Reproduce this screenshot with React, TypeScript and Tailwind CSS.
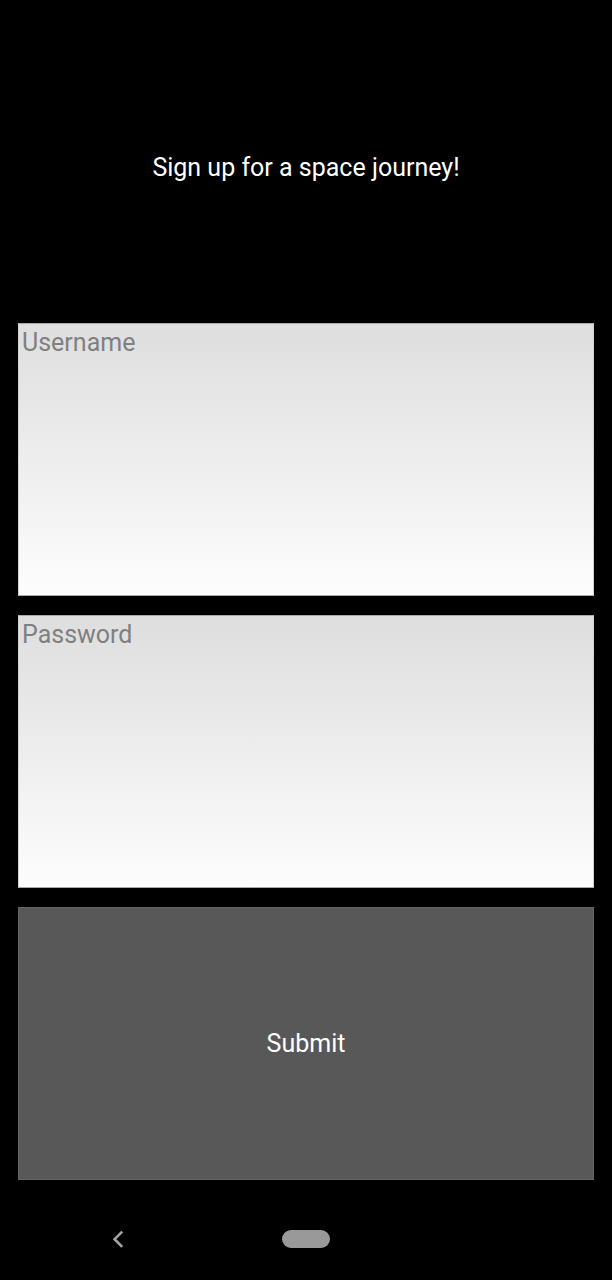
import React from "react";

type FieldProps = {
  name: string;
  type: string;
  autoComplete: string;
};

function Field({ name, type, autoComplete }: FieldProps) {
  return (
    <label className="flex cursor-text flex-col border border-x-[#d0d0d0] border-y-[#a8a8a8] bg-linear-to-b from-[#dedede] to-[#fdfdfd]">
      <input
        type={type}
        name={name.toLowerCase()}
        aria-label={name}
        placeholder={name}
        autoComplete={autoComplete}
        className="h-[38px] w-full bg-transparent px-[3px] text-[25px] leading-[38px] text-black outline-none placeholder:text-[#808080] placeholder:opacity-100"
      />
    </label>
  );
}

export default function App() {
  return (
    <div className="flex min-h-screen flex-col bg-black font-['Roboto',sans-serif] text-[25px] text-white">
      <form
        className="grid flex-1 auto-rows-fr gap-[19px] px-[18px] pt-[31px] pb-[18px]"
        onSubmit={(event: React.FormEvent) => event.preventDefault()}
      >
        <h1 className="flex items-center justify-center text-center">
          Sign up for a space journey!
        </h1>
        <Field name="Username" type="text" autoComplete="username" />
        <Field name="Password" type="password" autoComplete="new-password" />
        <button
          type="submit"
          className="border border-[#646464] bg-[#585858] text-center"
        >
          Submit
        </button>
      </form>
      <nav
        className="grid h-[82px] grid-cols-5 items-center px-8"
        aria-label="System"
      >
        <button
          type="button"
          aria-label="Back"
          className="flex h-12 w-12 items-center justify-center justify-self-end"
        >
          <svg
            width="24"
            height="24"
            viewBox="0 0 24 24"
            fill="none"
            stroke="#a3a3a3"
            strokeWidth="2.6"
            aria-hidden="true"
          >
            <path d="M16.2 4.6 8.6 12.2l7.6 7.6" />
          </svg>
        </button>
        <button
          type="button"
          aria-label="Home"
          className="col-start-3 h-[18px] w-12 justify-self-center rounded-full bg-[#999999]"
        />
      </nav>
    </div>
  );
}
